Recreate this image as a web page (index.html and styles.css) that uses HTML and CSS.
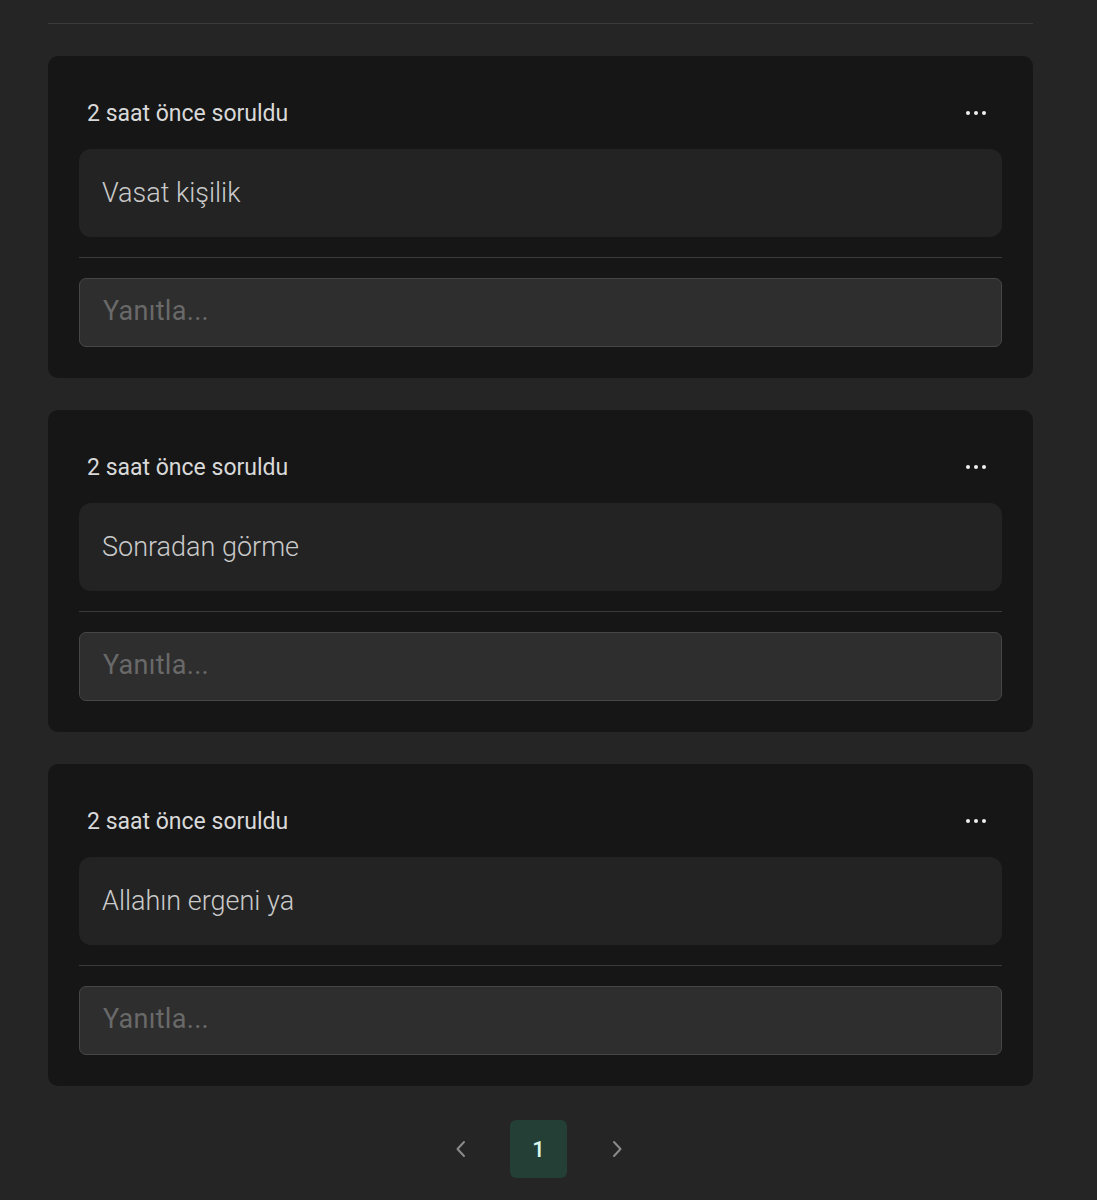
FILE: index.html
```html
<!DOCTYPE html>
<html lang="tr">
<head>
<meta charset="utf-8">
<title>Sorular</title>
<link rel="stylesheet" href="styles.css">
</head>
<body>
<main class="page">
  <hr class="top-rule">
  <section class="card">
    <div class="card-head">
      <span class="meta">2 saat önce soruldu</span>
      <button class="more" aria-label="Diğer"><i></i><i></i><i></i></button>
    </div>
    <div class="question">Vasat kişilik</div>
    <hr class="divider">
    <input class="reply" type="text" placeholder="Yanıtla...">
  </section>
  <section class="card">
    <div class="card-head">
      <span class="meta">2 saat önce soruldu</span>
      <button class="more" aria-label="Diğer"><i></i><i></i><i></i></button>
    </div>
    <div class="question">Sonradan görme</div>
    <hr class="divider">
    <input class="reply" type="text" placeholder="Yanıtla...">
  </section>
  <section class="card">
    <div class="card-head">
      <span class="meta">2 saat önce soruldu</span>
      <button class="more" aria-label="Diğer"><i></i><i></i><i></i></button>
    </div>
    <div class="question">Allahın ergeni ya</div>
    <hr class="divider">
    <input class="reply" type="text" placeholder="Yanıtla...">
  </section>
  <nav class="pager">
    <button class="pg-arrow" aria-label="Önceki">
      <svg width="14" height="20" viewBox="0 0 14 20"><path d="M10 3 L3.5 10 L10 17" fill="none" stroke="currentColor" stroke-width="2" stroke-linecap="round" stroke-linejoin="round"/></svg>
    </button>
    <button class="pg-num">1</button>
    <button class="pg-arrow" aria-label="Sonraki">
      <svg width="14" height="20" viewBox="0 0 14 20"><path d="M4 3 L10.5 10 L4 17" fill="none" stroke="currentColor" stroke-width="2" stroke-linecap="round" stroke-linejoin="round"/></svg>
    </button>
  </nav>
</main>
</body>
</html>
```

FILE: styles.css
```css
* { box-sizing: border-box; }
html, body {
  margin: 0;
  background: #252525;
  font-family: Roboto, "Noto Sans", "Liberation Sans", sans-serif;
}
.page {
  width: 985px;
  margin-left: 48px;
  padding-top: 23px;
  padding-bottom: 40px;
}
.top-rule {
  margin: 0 0 32px 0;
  border: 0;
  height: 1px;
  background: #3b3b3b;
}
.card {
  background: #161616;
  border-radius: 10px;
  padding: 31px;
  margin-bottom: 32px;
}
.card-head {
  height: 52px;
  display: flex;
  align-items: center;
  justify-content: space-between;
  padding-left: 8px;
  padding-right: 16px;
}
.meta {
  font-size: 23px;
  color: #d9d9d9;
  font-weight: 400;
}
.more {
  background: none;
  border: 0;
  padding: 0;
  display: flex;
  gap: 4px;
  cursor: pointer;
}
.more i {
  width: 4px;
  height: 4px;
  border-radius: 50%;
  background: #f0f0f0;
  display: block;
}
.question {
  margin-top: 10px;
  height: 88px;
  background: #232323;
  border-radius: 12px;
  padding-left: 23px;
  display: flex;
  align-items: center;
  font-size: 27px;
  font-weight: 300;
  color: #cacaca;
}
.divider {
  margin: 20px 0;
  border: 0;
  height: 1px;
  background: #3a3a3a;
}
.reply {
  display: block;
  width: 100%;
  height: 69px;
  background: #2e2e2e;
  border: 1px solid #464646;
  border-radius: 7px;
  padding: 0 22px 3px 23px;
  font-family: inherit;
  font-size: 27px;
  font-weight: 400;
  letter-spacing: 0.3px;
  color: #cacaca;
  outline: none;
}
.reply::placeholder {
  color: #696969;
}
.pager {
  display: flex;
  justify-content: center;
  align-items: center;
  gap: 21px;
  margin-top: 34px;
  padding-right: 4px;
}
.pg-arrow {
  width: 57px;
  height: 57px;
  background: none;
  border: 0;
  color: #8a8a8a;
  display: flex;
  align-items: center;
  justify-content: center;
  padding: 0;
}
.pg-num {
  width: 57px;
  height: 58px;
  background: #233f36;
  border: 0;
  border-radius: 6px;
  color: #daf7ea;
  font-family: inherit;
  font-size: 22px;
  font-weight: 500;
  padding: 0;
}
```
